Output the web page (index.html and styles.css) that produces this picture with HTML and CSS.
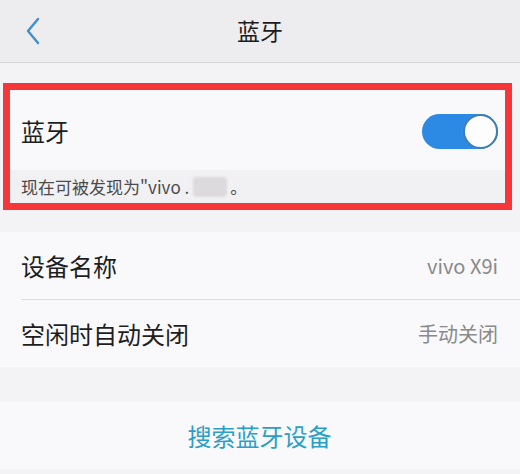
FILE: index.html
```html
<!DOCTYPE html>
<html lang="zh-CN">
<head>
<meta charset="utf-8">
<link rel="stylesheet" href="styles.css">
</head>
<body>
<div class="page">
  <header class="topbar">
    <svg class="back" width="16" height="28" viewBox="0 0 16 28"><path d="M13 2 L3 14 L13 26" fill="none" stroke="#3f8fcf" stroke-width="2.4" stroke-linecap="round" stroke-linejoin="round"/></svg>
    <h1 class="title">蓝牙</h1>
  </header>
  <div class="gap g1"></div>
  <section class="highlight">
    <div class="row main-row">
      <span class="label">蓝牙</span>
      <span class="toggle"><span class="knob"></span></span>
    </div>
    <div class="hint">现在可被发现为"vivo .<span class="blur"></span>。</div>
  </section>
  <div class="gap g2"></div>
  <section class="group">
    <div class="row">
      <span class="label">设备名称</span>
      <span class="value">vivo X9i</span>
    </div>
    <div class="sep"></div>
    <div class="row">
      <span class="label">空闲时自动关闭</span>
      <span class="value">手动关闭</span>
    </div>
  </section>
  <div class="gap g3"></div>
  <section class="group">
    <div class="row center-row">
      <span class="action">搜索蓝牙设备</span>
    </div>
  </section>
</div>
</body>
</html>
```
FILE: styles.css
```css
* { box-sizing: border-box; margin: 0; padding: 0; }
html, body { background: #f3f2f5; }
body {
  font-family: "Noto Sans CJK SC", "Noto Sans", sans-serif;
  color: #1e1e1e;
  width: 520px;
  height: 474px;
  overflow: hidden;
}
.page { display: flex; flex-direction: column; }
.topbar {
  height: 63px;
  background: #edecef;
  border-bottom: 1px solid #d6d6d8;
  display: flex;
  align-items: center;
  justify-content: center;
  position: relative;
}
.back { position: absolute; left: 25px; top: 17px; }
.title { font-size: 23px; font-weight: 400; color: #1c1c1c; line-height: 1; margin-top: -2px; }
.g1 { height: 20px; }
.g2 { height: 22px; }
.g3 { height: 35px; }
.highlight {
  margin: 0 8px 0 3px;
  border: 7px solid #f7363a;
  background: #f1f0f3;
}
.row {
  height: 67px;
  background: #f9f8fb;
  display: flex;
  align-items: center;
  justify-content: space-between;
  padding: 0 22px 0 21px;
}
.main-row { height: 80px; padding: 2px 7px 0 11px; }
.label { font-size: 24px; line-height: 1; color: #1e1e1e; }
.toggle {
  width: 76px;
  height: 35px;
  border-radius: 18px;
  background: #2c8ae4;
  position: relative;
  display: block;
}
.knob {
  position: absolute;
  right: 0;
  top: 0;
  width: 35px;
  height: 35px;
  border-radius: 50%;
  background: #fdfdfd;
  border: 2px solid #3f7fb5;
}
.hint {
  height: 33px;
  padding-left: 11px;
  font-size: 17px;
  color: #4a4a4a;
  display: flex;
  align-items: center;
  line-height: 1;
}
.blur {
  display: inline-block;
  width: 34px;
  height: 20px;
  margin: 0 3px 0 4px;
  background: #dcdadc;
  border-radius: 4px;
  filter: blur(1px);
}
.group { background: #f9f8fb; }
.sep { height: 1px; background: #dcdcde; margin-left: 21px; }
.value { font-size: 20px; color: #8a8a8a; line-height: 1; }
.center-row { justify-content: center; }
.action { font-size: 24px; color: #2a9fc9; line-height: 1; }
```
